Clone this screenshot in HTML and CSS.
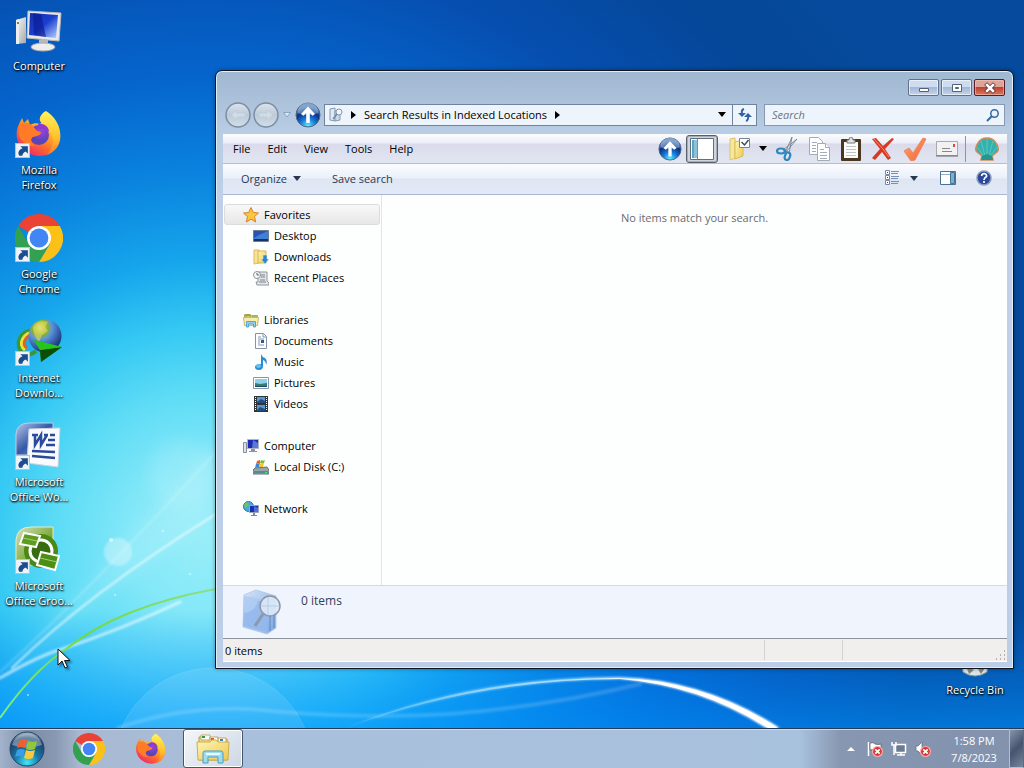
FILE: index.html
```html
<!DOCTYPE html>
<html lang="en">
<head>
<meta charset="utf-8">
<title>Search Results in Indexed Locations</title>
<link rel="stylesheet" href="styles.css">
</head>
<body>
<svg class="defs" aria-hidden="true">
  <defs>
    <linearGradient id="gFox" x1="1" y1="0" x2="0.2" y2="1"><stop offset="0" stop-color="#fff44f"/><stop offset=".35" stop-color="#ffb62a"/><stop offset=".65" stop-color="#ff6a2a"/><stop offset="1" stop-color="#e8207c"/></linearGradient>
    <linearGradient id="gFlame" x1="0" y1="0" x2="0" y2="1"><stop offset="0" stop-color="#fff25a"/><stop offset=".6" stop-color="#ffc02c"/><stop offset="1" stop-color="#ff7a30"/></linearGradient>
    <radialGradient id="gPurple" cx=".6" cy=".3"><stop offset="0" stop-color="#a040e0"/><stop offset="1" stop-color="#5a45b8"/></radialGradient>
    <linearGradient id="gScreen" x1="0" y1="0" x2="1" y2="1"><stop offset="0" stop-color="#1230a8"/><stop offset=".5" stop-color="#1a3fd0"/><stop offset="1" stop-color="#b8d4ff"/></linearGradient>
    <linearGradient id="gMetal" x1="0" y1="0" x2="1" y2="1"><stop offset="0" stop-color="#fafafa"/><stop offset="1" stop-color="#a8a8a8"/></linearGradient>
    <radialGradient id="gUp" cx=".5" cy=".95" r=".8"><stop offset="0" stop-color="#5cf0ff"/><stop offset=".4" stop-color="#1878d8"/><stop offset=".75" stop-color="#0b2f80"/><stop offset="1" stop-color="#5a86bc"/></radialGradient>
    <linearGradient id="gDim" x1="0" y1="0" x2="0" y2="1"><stop offset="0" stop-color="#dce4ec"/><stop offset=".5" stop-color="#bccad8"/><stop offset="1" stop-color="#d3dfe9"/></linearGradient>
    <linearGradient id="gFolder" x1="0" y1="0" x2="1" y2="1"><stop offset="0" stop-color="#fff6b8"/><stop offset="1" stop-color="#ecc850"/></linearGradient>
    <linearGradient id="gWord" x1="0" y1="0" x2="1" y2="1"><stop offset="0" stop-color="#b8c8e8"/><stop offset=".5" stop-color="#3458a8"/><stop offset="1" stop-color="#8aa4d8"/></linearGradient>
    <linearGradient id="gGroove" x1="0" y1="0" x2="1" y2="1"><stop offset="0" stop-color="#d8e0c0"/><stop offset=".6" stop-color="#7aaa38"/><stop offset="1" stop-color="#3a7a10"/></linearGradient>
    <radialGradient id="gGlobe" cx=".35" cy=".25" r=".8"><stop offset="0" stop-color="#f4f080"/><stop offset=".3" stop-color="#8ab030"/><stop offset=".45" stop-color="#5a94e0"/><stop offset="1" stop-color="#10286c"/></radialGradient>
    <radialGradient id="gOrb" cx=".5" cy=".9" r=".9"><stop offset="0" stop-color="#40e8f8"/><stop offset=".4" stop-color="#1878a8"/><stop offset=".8" stop-color="#1a4068"/><stop offset="1" stop-color="#a8c0d4"/></radialGradient>
    <linearGradient id="gBox" x1="0" y1="0" x2="1" y2="1"><stop offset="0" stop-color="#d4e4f8"/><stop offset="1" stop-color="#7ea6e0"/></linearGradient>
    <linearGradient id="gCheck" x1="0" y1="0" x2="1" y2="1"><stop offset="0" stop-color="#ffa878"/><stop offset="1" stop-color="#f06030"/></linearGradient>
    <symbol id="firefox" viewBox="0 0 48 48">
      <path d="M4 14 7 8l2 5 4-4 2 6c3-2 7-2 10-1l4-4c2 2 6 4 9 9l5-3c4 8 3 18-3 24-7 7-20 8-28 2C2 36-1 24 4 14Z" fill="url(#gFox)"/>
      <path d="M31 1c8 5 15 14 14 26-1 9-6 15-13 18 5-6 7-12 5-19-2-6-9-10-12-15-1-4 2-8 6-10Z" fill="url(#gFlame)"/>
      <circle cx="24" cy="25" r="10" fill="url(#gPurple)"/>
      <path d="M4 15c6-4 13-2 17 5 2 2 5 1 5 3-1 3-5 3-8 4-3 2-2 6 2 9-8 1-13-4-16-10Z" fill="#ff7b26"/>
      <path d="M23 14c5-1 11 2 11 8-3-4-7-4-10-3Z" fill="#9138cf"/>
    </symbol>
    <symbol id="chrome" viewBox="0 0 48 48">
      <path d="M24 24 3.2 12A24 24 0 0 1 44.8 12Z" fill="#ea4335"/>
      <path d="M24 12h20.8A24 24 0 0 1 24 48l11-18Z" fill="#fbc116"/>
      <path d="M3.2 12A24 24 0 0 0 24 48l10.4-18L24 35 13.6 30Z" fill="#34a150"/>
      <circle cx="24" cy="24" r="12" fill="#fff"/><circle cx="24" cy="24" r="9.4" fill="#4285f4"/>
    </symbol>
    <symbol id="shortcut" viewBox="0 0 14 14">
      <path d="M0 0h14v14H0Z" fill="#eef3f8"/><path d="M.5.5h13v13H.5Z" fill="none" stroke="#b8c4d0"/>
      <path d="M5 3h7v7L10 8C8 9 7 10 7 12H4C2 9 4 6 7 5Z" fill="#1c4c90"/>
    </symbol>
    <symbol id="up" viewBox="0 0 26 26">
      <circle cx="13" cy="13" r="12" fill="url(#gUp)" stroke="#4c6684"/>
      <path d="M2.500 11A10.500 10.500 0 0 1 23.500 11Q13 15 2.500 11Z" fill="#b4cce8" opacity=".45"/>
      <path d="M13 4.500 20 12l-2.500 1.800L14.800 11v10h-3.600V11l-2.700 2.800L6 12Z" fill="#fff"/>
    </symbol>
    <symbol id="caret" viewBox="0 0 8 5"><path d="M0 0h8L4 5Z" fill="currentColor"/></symbol>
    <symbol id="explorer" viewBox="0 0 34 30">
      <path d="M3 3h11l2 2h15v21H3Z" fill="#f3dc88" stroke="#b89848"/>
      <path d="M5 1h9v5H5ZM14 3h8v5h-8ZM22 4h8v5h-8Z" fill="#fff" stroke="#c4a860"/>
      <path d="M6 2h3v2H6Z" fill="#3a9838"/><path d="M15 4h3v2h-3Z" fill="#d86028"/><path d="M24 5h3v2h-3Z" fill="#4080c0"/>
      <path d="M1 8h13l2-2h4l2 2h11l-1 18H2Z" fill="url(#gFolder)" stroke="#d0ac4c"/>
      <path d="M7 29V19q0-2 2-2h16q2 0 2 2v10h-5v-6H12v6Z" fill="#9cdcf0" stroke="#4e9cc4"/>
      <path d="M10 20h14" stroke="#e8fbff" stroke-width="2"/>
    </symbol>
    <symbol id="redx" viewBox="0 0 10 10"><circle cx="5" cy="5" r="4.500" fill="#d83838" stroke="#f4b0a8"/><path d="m3 3 4 4M7 3 3 7" stroke="#fff" stroke-width="1.500"/></symbol>
  </defs>
</svg>

<main class="desktop">
  <svg class="wallpaper" viewBox="0 0 1024 728" preserveAspectRatio="none" aria-hidden="true">
    <defs>
      <radialGradient id="sky" gradientUnits="userSpaceOnUse" cx="205" cy="540" r="820">
        <stop offset="0" stop-color="#98eef8"/><stop offset=".09" stop-color="#84e8f8"/><stop offset=".18" stop-color="#5edcf6"/><stop offset=".26" stop-color="#34c8f3"/><stop offset=".34" stop-color="#16a6ec"/><stop offset=".45" stop-color="#0a82de"/><stop offset=".57" stop-color="#0564cc"/><stop offset=".72" stop-color="#064fb0"/><stop offset=".88" stop-color="#054798"/><stop offset="1" stop-color="#054a9c"/>
      </radialGradient>
      <linearGradient id="floor" x1="0" y1="0" x2="0" y2="1"><stop offset="0" stop-color="#0086ff" stop-opacity="0"/><stop offset="1" stop-color="#0094ff" stop-opacity=".6"/></linearGradient>
      <linearGradient id="fade" x1="0" y1="0" x2="1" y2="0"><stop offset="0" stop-color="#fff" stop-opacity=".1"/><stop offset=".5" stop-color="#d0f6ff" stop-opacity=".6"/><stop offset=".7" stop-color="#fff"/></linearGradient>
      <linearGradient id="green" x1="0" y1="0" x2="1" y2="0"><stop offset="0" stop-color="#7cec84"/><stop offset=".4" stop-color="#74d83c"/><stop offset="1" stop-color="#8ce08c"/></linearGradient>
      <filter id="soft"><feGaussianBlur stdDeviation="1"/></filter>
      <filter id="haze"><feGaussianBlur stdDeviation="8"/></filter>
    </defs>
    <path d="M0 0h1024v728H0Z" fill="url(#sky)"/>
    <path d="M0 610h1024v118H0Z" fill="url(#floor)"/>
    <path d="M0 684 100 570 216 440v76L90 605Z" fill="#fff" opacity=".12" filter="url(#haze)"/>
    <circle cx="182" cy="474" r="34" fill="#fff" opacity=".12" filter="url(#haze)"/>
    <circle cx="118" cy="552" r="14" fill="#fff" opacity=".32" filter="url(#soft)"/>
    <circle cx="213" cy="768" r="100" fill="#fff" fill-opacity=".1" stroke="#fff" stroke-opacity=".12"/>
    <g fill="none" stroke="#fff" stroke-linecap="round">
      <path d="M0 672Q80 600 216 452" stroke-opacity=".2" stroke-width="2" filter="url(#soft)"/>
      <path d="M12 668Q90 592 216 514" stroke-opacity=".7" stroke-width="2" filter="url(#soft)"/>
      <path d="M0 678Q38 656 62 649 120 630 180 602" stroke-opacity=".6" stroke-width="3" filter="url(#soft)"/>
      <path d="M118 728Q180 706 250 709 350 720 450 714 550 706 640 684" stroke-opacity=".16" stroke-width="4" filter="url(#soft)"/>
    </g>
    <path d="M0 718Q32 672 66 649 120 606 216 589" fill="none" stroke="url(#green)" stroke-width="2"/>
    <path d="M345 728Q470 676 620 677 706 680 780 728h-14Q700 686 620 679 480 680 345 728Z" fill="url(#fade)" filter="url(#soft)"/>
    <path d="M345 728Q470 677 620 678 706 681 778 728h-10Q700 685 620 679 480 679 345 728Z" fill="url(#fade)"/>
    <g fill="#fff" opacity=".6"><circle cx="111" cy="540" r="2"/><circle cx="163" cy="531" r="1"/><circle cx="190" cy="574" r="1"/><circle cx="115" cy="595" r="1"/><circle cx="28" cy="695" r="1"/></g>
  </svg>

  <nav class="shortcuts" aria-label="Desktop">
    <a class="shortcut" href="#"><svg viewBox="0 0 48 48"><path d="m1 14 10-3v26l-10 1Z" fill="url(#gMetal)"/><path d="M1 14l3-1v25H1Z" fill="#eee"/><circle cx="3" cy="17" r="1" fill="#364"/><path d="m13 5 33 2-2 28-32-3Z" fill="#e8e8ea" stroke="#bbb"/><path d="m15 7 28 2-2 23-27-3Z" fill="url(#gScreen)"/><path d="m18 7 8 1 5 23-12-2Z" fill="#0a1890" opacity=".6"/><path d="M24 34h9v6h-9Z" fill="#b8b8ba"/><ellipse cx="28" cy="41" rx="12" ry="4" fill="#ededed" stroke="#aaa"/></svg><span>Computer</span></a>
    <a class="shortcut" href="#"><svg viewBox="0 0 48 48"><use href="#firefox"/><use href="#shortcut" x="0" y="33" width="15" height="15"/></svg><span>Mozilla Firefox</span></a>
    <a class="shortcut" href="#"><svg viewBox="0 0 48 48"><use href="#chrome"/><use href="#shortcut" x="0" y="33" width="15" height="15"/></svg><span>Google Chrome</span></a>
    <a class="shortcut" href="#"><svg viewBox="0 0 48 48"><path d="M20 12C4 12-1 28 8 35q6 4 13-2" fill="none" stroke="#389838" stroke-width="4"/><path d="M20 14C8 14 2 27 10 32" fill="none" stroke="#f0e030" stroke-width="3"/><path d="M20 17C11 16 6 26 12 30" fill="none" stroke="#e06028" stroke-width="3"/><circle cx="30" cy="18" r="16.500" fill="url(#gGlobe)"/><path d="M18 9q7-8 15-5l-3 5 3 4-6 4-3 7q-6-6-6-15Z" fill="#dcd860" opacity=".6"/><path d="m19 22 28 7-21 15-1-12Z" fill="#18b010"/><path d="m25 32 22-3-21 15Z" fill="#0b4c08"/><path d="m19 22 28 7-22 3Z" fill="#26c41c"/><use href="#shortcut" x="0" y="33" width="15" height="15"/></svg><span>Internet Downlo...</span></a>
    <a class="shortcut" href="#"><svg viewBox="0 0 48 48"><path d="M1 12Q2 1 14 1h24v32H1Z" fill="url(#gWord)" stroke="#c0cce4"/><path d="m14 7 31-1-2 39-31-4Z" fill="#f8fafe" stroke="#ccd4e4"/><path d="M17 13h6M20 13l0 10 6-10 0 10 6-10M29 13h4" fill="none" stroke="#2b4c9c" stroke-width="2.500"/><path d="M35 13h5M33 18h7M31 23h9M17 29l23 1M17 34l23 2" stroke="#2a4a98" stroke-width="2.500"/><use href="#shortcut" x="0" y="33" width="15" height="15"/></svg><span>Microsoft Office Wo...</span></a>
    <a class="shortcut" href="#"><svg viewBox="0 0 48 48"><path d="M1 14Q2 1 16 1h22v38H1Z" fill="url(#gGroove)" stroke="#e4ecc8"/><circle cx="26" cy="25" r="17" fill="#4b8818"/><circle cx="26" cy="25" r="11" fill="#386c10" stroke="#fff" stroke-width="3"/><path d="m9 7 16 3-4 11L5 18Z" fill="#5c9c20" stroke="#fff" stroke-width="2"/><path d="m26 26 18 4-4 14-18-5Z" fill="#4b9014" stroke="#fff" stroke-width="2"/><path d="m8 12 14 3M25 32l17 4" stroke="#a8cc70"/><use href="#shortcut" x="0" y="33" width="15" height="15"/></svg><span>Microsoft Office Groo...</span></a>
  </nav>
  <a class="shortcut recycle" href="#"><svg viewBox="0 0 48 48"><path d="M9 4h30l-3 38q-12 8-24 0Z" fill="#dfe4e4" stroke="#87918e"/><path d="m15 36 8 4-5 4ZM27 39l7-1-4 6Z" fill="#7d8984"/></svg><span>Recycle Bin</span></a>

  <section class="window" aria-label="Search Results in Indexed Locations">
    <header class="titlebar">
      <button class="caption" aria-label="Minimize"><svg viewBox="0 0 12 12"><path d="M1.500 6.500h9v3h-9Z" fill="#fff" stroke="#555f78"/></svg></button>
      <button class="caption" aria-label="Maximize"><svg viewBox="0 0 12 12"><path d="M1.500 2.500h9v7h-9Z" fill="#fff" stroke="#555f78"/><path d="M4.500 5.500h3v1h-3Z" fill="#9bb" stroke="#555f78"/></svg></button>
      <button class="caption close" aria-label="Close"><svg viewBox="0 0 12 12"><path d="m3 3 6 6M9 3 3 9" stroke="#5d3438" stroke-width="4" stroke-linecap="square"/><path d="m3 3 6 6M9 3 3 9" stroke="#fff" stroke-width="2.500" stroke-linecap="square"/></svg></button>
    </header>
    <div class="navbar">
      <div class="history">
        <button class="plain" aria-label="Back"><svg width="26" height="26" viewBox="0 0 26 26"><circle cx="13" cy="13" r="12" fill="url(#gDim)" stroke="#7b8da3" stroke-width="1.500"/><path d="m6 13 6-5v3h8v4h-8v3Z" fill="#d0dbe6" stroke="#bccad8" stroke-width=".7"/></svg></button>
        <button class="plain" aria-label="Forward"><svg width="26" height="26" viewBox="0 0 26 26"><circle cx="13" cy="13" r="12" fill="url(#gDim)" stroke="#7b8da3" stroke-width="1.500"/><path d="m20 13-6-5v3H6v4h8v3Z" fill="#d0dbe6" stroke="#bccad8" stroke-width=".7"/></svg></button>
      </div>
      <button class="plain recent" aria-label="Recent pages"><svg width="8" height="6" viewBox="0 0 8 6"><path d="M.5.500h7L4 5Z" fill="#dce8f4" stroke="#8ba4c0"/></svg></button>
      <button class="plain" aria-label="Up"><svg width="26" height="26"><use href="#up"/></svg></button>
      <div class="address">
        <svg width="14" height="16" viewBox="0 0 14 16"><path d="m1 2 5-1v13l-5-1Z" fill="#dfe9f4" stroke="#8498b0"/><path d="M6 4h5v9l-5 1Z" fill="#c8d6e6" stroke="#8498b0"/><circle cx="10" cy="5" r="3" fill="#eef4fa" stroke="#8498b0"/><path d="m8 7-4 5" stroke="#7088a4" stroke-width="1.500"/></svg>
        <svg width="5" height="8" viewBox="0 0 5 8"><path d="m0 0 5 4-5 4Z"/></svg>
        <button class="plain crumb">Search Results in Indexed Locations</button>
        <svg width="5" height="8" viewBox="0 0 5 8"><path d="m0 0 5 4-5 4Z"/></svg>
        <button class="plain drop" aria-label="Previous locations"><svg width="8" height="5"><use href="#caret"/></svg></button>
        <button class="plain refresh" aria-label="Refresh"><svg width="14" height="14" viewBox="0 0 14 14"><path d="M6 1Q3 2 4 6M8 13q3-1 2-6" fill="none" stroke="#2f62a8" stroke-width="2"/><path d="m0 5 4 4 4-4ZM6 9l4-4 4 4Z" fill="#2f62a8"/></svg></button>
      </div>
      <label class="search"><input type="text" placeholder="Search" aria-label="Search">
        <svg width="14" height="14" viewBox="0 0 14 14"><circle cx="8.500" cy="5.500" r="3.700" fill="#eaf4fc" stroke="#34689e" stroke-width="1.500"/><path d="m6 8-5 5" stroke="#34689e" stroke-width="2"/></svg></label>
    </div>

    <div class="menubar">
      <nav class="menus" aria-label="Menu">
        <button class="plain">File</button><button class="plain">Edit</button><button class="plain">View</button><button class="plain">Tools</button><button class="plain">Help</button>
      </nav>
      <div class="tools">
        <button class="tool" aria-label="Up one level"><svg><use href="#up"/></svg></button>
        <button class="tool pressed" aria-label="Navigation pane"><svg viewBox="0 0 24 24"><path d="M.5 1.500h23v21H.5Z" fill="#fff" stroke="#5d6f80"/><path d="M2 3h5v18H2Z" fill="#8bc2d8"/><path d="M2 3h2v18H2Z" fill="#5da4c0"/><path d="M7.500 2v20" stroke="#7090a4"/></svg></button>
        <button class="tool wide" aria-label="Folder options"><svg viewBox="0 0 24 24"><path d="m3 2 5-1v20l-5 2Z" fill="#f6e6a0" stroke="#dcc468"/><path d="m8 5 8-2v16l-8 3Z" fill="url(#gFolder)" stroke="#dabc54"/><path d="M12.500 1.500h10v9h-10Z" fill="#fff" stroke="#788494"/><path d="m14.500 5 3 3 4-5" fill="none" stroke="#3c4c64" stroke-width="1.500"/></svg></button>
        <button class="tool narrow" aria-label="More options"><svg class="caret" viewBox="0 0 8 5"><use href="#caret"/></svg></button>
        <button class="tool" aria-label="Cut"><svg viewBox="0 0 24 24"><path d="m22 2-11 13-3-2ZM17 0l-3 17-3-3Z" fill="#dfe4ea" stroke="#6c7886" stroke-width=".8"/><ellipse cx="6" cy="14" rx="4" ry="2.500" fill="none" stroke="#2c88be" stroke-width="2.200"/><ellipse cx="12.500" cy="19" rx="2.500" ry="4" fill="none" stroke="#2c88be" stroke-width="2.200" transform="rotate(20 12 19)"/></svg></button>
        <button class="tool" aria-label="Copy"><svg viewBox="0 0 24 24"><g fill="#fff" stroke="#a4abb4"><path d="M2.500.500h9l4 4v13h-13Z"/><path d="M10.500 6.500h8l4 4v13h-12Z"/><path d="M18.500 6.500v4h4"/></g><path d="M5 5.500h5M5 8.500h4M5 11.500h4M5 14.500h4M13 12.500h4M13 15.500h7M13 18.500h7M13 21.500h7" stroke="#a0acbc"/></svg></button>
        <button class="tool" aria-label="Paste"><svg viewBox="0 0 24 24"><rect x="2" y="2" width="20" height="22" rx="1" fill="#49371f"/><path d="M5 5h14v16H5Z" fill="#fcfcfa"/><path d="M8 3h2q0-3 2-3t2 3h2v3H8Z" fill="#e4e4e4" stroke="#777"/><path d="M7 9.500h10M7 12.500h10M7 15.500h10M7 18.500h10" stroke="#c0c4c8"/></svg></button>
        <button class="tool" aria-label="Delete"><svg viewBox="0 0 24 24"><path d="m1 2 4-1 7 8 9-8 2 1-9 10 6 9-3 2-6-8-7 8-3-2 8-9Z" fill="#d63820"/><path d="m3 2 9 10 6 8" stroke="#ff8a68" fill="none"/></svg></button>
        <button class="tool" aria-label="Apply"><svg viewBox="0 0 24 24"><path d="m1 14 5-3 4 5L20 1l3 1-11 21-4 1Z" fill="url(#gCheck)" stroke="#f08860"/></svg></button>
        <button class="tool" aria-label="E-mail"><svg viewBox="0 0 24 24"><path d="M1.500 4.500h21v14h-21Z" fill="#f2f2f2" stroke="#aaa"/><path d="M1 19h22" stroke="#666"/><path d="M18 7h2v3h-2Z" fill="#dc4848"/><path d="M7 11.500h8M7 14.500h10" stroke="#888"/></svg></button>
        <span class="rule"></span>
        <button class="tool" aria-label="Classic settings"><svg viewBox="0 0 24 24"><path d="M12 1q6 0 9 5 4 6 1 9l-5 4 1 4H6l1-4-5-4Q-1 12 3 6q3-5 9-5Z" fill="#32b2ae" stroke="#d08c54" stroke-width="1.500"/><path d="M12 19V2M10 19 6 4M14 19l4-15M8 18 2 10M16 18l6-8" stroke="#5cc6be"/><path d="m7 19 5-2 5 2 1 4H6Z" fill="#28948e"/></svg></button>
      </div>
    </div>

    <div class="commands">
      <button class="plain">Organize <svg width="8" height="5"><use href="#caret"/></svg></button>
      <button class="plain save">Save search</button>
      <span class="spacer"></span>
      <button class="plain" aria-label="Change your view"><svg width="16" height="16" viewBox="0 0 16 16"><g fill="#fff" stroke="#7888a0"><path d="M1.500.500h4v4h-4ZM1.500 5.500h4v4h-4ZM1.500 10.500h4v4h-4Z"/></g><path d="M7 1.500h8M7 3.500h7M7 6.500h8M7 8.500h7M7 11.500h8M7 13.500h7" stroke="#7890b8"/><path d="M3 2h1v1H3ZM3 7h1v1H3ZM3 12h1v1H3Z" fill="#345"/></svg></button>
      <button class="plain more" aria-label="More views"><svg width="8" height="5"><use href="#caret"/></svg></button>
      <button class="plain preview" aria-label="Preview pane"><svg width="16" height="16" viewBox="0 0 16 16"><path d="M.5 1.500h15v13H.5Z" fill="#fff" stroke="#4a7094"/><path d="M10.500 2.500h4v11h-4Z" fill="#6eb4d4" stroke="#4a7094"/><path d="M1 4.500h9" stroke="#8fafc8"/></svg></button>
      <button class="plain" aria-label="Help"><svg width="16" height="16" viewBox="0 0 16 16"><circle cx="8" cy="8" r="7" fill="#2b489c" stroke="#8e9cb8" stroke-width="1.500"/><path d="M5.500 6Q6 3.500 8.200 3.500 11 4 10.500 6.500 8 8 8 10M8 11v2" fill="none" stroke="#fff" stroke-width="1.700"/></svg></button>
    </div>

    <div class="body">
      <nav class="tree" aria-label="Folders">
        <div class="group">
          <a class="node selected" href="#"><svg viewBox="0 0 16 16"><path d="m8 .500 2.300 5 5.200.500-4 3.600 1.200 5.400L8 12.200 3.300 15l1.200-5.400L.5 6l5.200-.500Z" fill="#fbc83c" stroke="#d8802c"/></svg>Favorites</a>
          <a class="node leaf" href="#"><svg viewBox="0 0 16 16"><path d="M.5 2.500h15v11H.5Z" fill="#2754b4" stroke="#6e7c90"/><path d="m1 10 5-3 9-4v8H1Z" fill="#4080d8"/><path d="M1 12h14" stroke="#1a3060" stroke-width="2"/></svg>Desktop</a>
          <a class="node leaf" href="#"><svg viewBox="0 0 16 16"><path d="M1 1h5v13l-5 1Z" fill="#f8e498" stroke="#dcba58"/><path d="M5 2h8v12H5Z" fill="url(#gFolder)" stroke="#dcb44c"/><path d="M10 6h4v4h2l-4 5-4-5h2Z" fill="#2a88cc" stroke="#e0f0fa" stroke-width=".5"/></svg>Downloads</a>
          <a class="node leaf" href="#"><svg viewBox="0 0 16 16"><path d="M5 2h9v9l2 2v2H4l-1-3h2Z" fill="#e4e6e8" stroke="#90969c"/><path d="M8 5h4M8 7h4M7 10h5M6 12h7" stroke="#78828c"/><circle cx="4" cy="5" r="3.500" fill="#f6f8f8" stroke="#8a9298"/><path d="M4 3v2h2" fill="none" stroke="#567"/></svg>Recent Places</a>
        </div>
        <div class="group">
          <a class="node" href="#"><svg viewBox="0 0 16 16"><path d="M1.500 2.500h6l1 1h6v9h-13Z" fill="#e8d070" stroke="#b8a858"/><path d="M2 4h2V3h2v1h2M9 5h5" stroke="#4ca850" fill="none"/><path d="M.5 5.500h15l-1 8h-13Z" fill="#f8ecb0" stroke="#ccb870"/><path d="M3.500 15V9.500h9V15h-2v-3h-5v3Z" fill="#90d0ec" stroke="#58a4cc"/></svg>Libraries</a>
          <a class="node leaf" href="#"><svg viewBox="0 0 16 16"><path d="M2.500.500h8l3 3v12h-11Z" fill="#fff" stroke="#8494a8"/><path d="M10 1v3h3" fill="none" stroke="#8494a8"/><path d="M5 4h3M5 6h6M5 8h2M5 10h2M5 12h6" stroke="#8098b8"/><path d="M8 7h3v3H8Z" fill="#385888"/></svg>Documents</a>
          <a class="node leaf" href="#"><svg viewBox="0 0 16 16"><path d="M8 0q1 3 4 4 3 3 1 7 0-4-3-5v6q0 4-4 4-4 0-4-3t6-3Z" fill="#2c8cd0"/><ellipse cx="5.500" cy="12" rx="2.500" ry="2" fill="#6cc0f0"/></svg>Music</a>
          <a class="node leaf" href="#"><svg viewBox="0 0 16 16"><path d="M.5 2.500h15v11H.5Z" fill="#fff" stroke="#8098b0"/><path d="M2 4h12v8H2Z" fill="#8cd0ec"/><path d="m2 8 5 1 7-1v4H2Z" fill="#34806c"/><path d="M2 11h12v1H2Z" fill="#246"/></svg>Pictures</a>
          <a class="node leaf" href="#"><svg viewBox="0 0 16 16"><path d="M1 0h14v16H1Z" fill="#303438"/><path d="M4 1h8v6H4ZM4 9h8v6H4Z" fill="#5c98d0"/><path d="m4 6 4-3 4 2v2H4ZM4 14l3-3 5 2v2H4Z" fill="#254c80"/><path d="M2.500 1v14M13.500 1v14" stroke="#fff" stroke-dasharray="1 1"/></svg>Videos</a>
        </div>
        <div class="group">
          <a class="node" href="#"><svg viewBox="0 0 16 16"><path d="M.5 4.500h3v10h-3Z" fill="#dde" stroke="#8890a0"/><path d="M4.500 1.500h11v9h-11Z" fill="#1c2cac" stroke="#b0b4c4"/><path d="m10 2 5 3v5H9Z" fill="#5878d8"/><path d="M8 11h4v2h2v1H6v-1h2Z" fill="#8d93a0"/></svg>Computer</a>
          <a class="node leaf" href="#"><svg viewBox="0 0 16 16"><path d="m2 9 12-1 2 3v4H0v-4Z" fill="#98a4a8" stroke="#60707c"/><path d="M1 12h14v2H1Z" fill="#4e8e90"/><path d="M12 13h2v1h-2Z" fill="#50e070"/><path d="m4 2 3-1v3l-4 1Z" fill="#e86028"/><path d="M8 1q2 1 4 0l-1 3q-2 1-4 0Z" fill="#80b838"/><path d="m3 5 4-1-1 4-4 1Z" fill="#3c88d0"/><path d="m7 5 4-1-1 4H6Z" fill="#f4c430"/></svg>Local Disk (C:)</a>
        </div>
        <div class="group">
          <a class="node" href="#"><svg viewBox="0 0 16 16"><circle cx="5.500" cy="5.500" r="5" fill="#48a8d8" stroke="#2878a0"/><path d="M3 1q4 1 2 4L2 7 1 4Z" fill="#6cc468"/><path d="M6.500 4.500h9v7h-9Z" fill="#1830b0" stroke="#98a4bc"/><path d="m11 5 4 2v4h-4Z" fill="#4c70d8"/><path d="M10 12h2v2h2v1H8v-1h2Z" fill="#7888a0"/></svg>Network</a>
        </div>
      </nav>
      <div class="results"><p>No items match your search.</p></div>
    </div>

    <div class="details">
      <svg width="40" height="46" viewBox="0 0 40 46"><path d="M2 6 14 1l20 6v32l-9 6L1 38Z" fill="url(#gBox)" stroke="#b4cdec"/><path d="m2 7 23 4v33L1 38Z" fill="#a8c8f2" opacity=".7"/><path d="M2 24q12-2 14-12l9 1v30L1 37Z" fill="#84aee8" opacity=".5"/><path d="M28 25v17M32 23v16" stroke="#5c86c4"/><circle cx="28" cy="17" r="10" fill="#dceaf8" fill-opacity=".9" stroke="#8b97a8" stroke-width="1.500"/><path d="M26 8v18M19 17h18" stroke="#b8cce4"/><path d="m21 25-8 12" stroke="#8c98ac" stroke-width="3"/></svg>
      <span>0 items</span>
    </div>
    <footer class="status"><span>0 items</span><span class="cell"></span><span class="cell last"></span>
      <svg class="grip" width="12" height="12" viewBox="0 0 12 12"><path d="M9 1h1v2H9ZM9 5h1v2H9ZM9 9h1v2H9ZM5 5h1v2H5ZM5 9h1v2H5ZM1 9h1v2H1Z" fill="#b5b2b0"/></svg></footer>
  </section>

  <svg class="cursor" width="14" height="21" viewBox="0 0 14 21" aria-hidden="true"><path d="M1 1v16l4-4 3 7 2.500-1-3-6.500H13Z" fill="#fff" stroke="#111"/></svg>
</main>

<footer class="taskbar">
  <button class="start" aria-label="Start"><svg width="38" height="38" viewBox="0 0 38 38"><circle cx="19" cy="19" r="17" fill="url(#gOrb)" stroke="#23425e"/><path d="M4 15A15.500 15.500 0 0 1 34 15Q19 20 4 15Z" fill="#dfeaf2" opacity=".4"/><path d="M11 11q4-3 8-1l-2 8q-4-2-8 0Z" fill="#ee6030"/><path d="M20 11q4 2 9 0l-2 8q-5 2-9 0Z" fill="#90c83c"/><path d="M9 20q4-2 8 0l-2 7q-4-2-8 0Z" fill="#3c9ce4"/><path d="M18 20q4 2 9 0l-2 8q-5 2-9 0Z" fill="#fcc83c"/></svg></button>
  <button class="task" aria-label="Google Chrome"><svg width="32" height="32"><use href="#chrome"/></svg></button>
  <button class="task" aria-label="Mozilla Firefox"><svg width="32" height="32"><use href="#firefox"/></svg></button>
  <button class="task active" aria-label="Windows Explorer"><svg width="34" height="30"><use href="#explorer"/></svg></button>
  <div class="tray">
    <button class="plain" aria-label="Show hidden icons"><svg width="8" height="4" viewBox="0 0 8 4"><path d="m0 4 4-4 4 4Z" fill="#fff"/></svg></button>
    <button class="plain" aria-label="Action Center"><svg width="16" height="16" viewBox="0 0 16 16"><path d="M1.500 1v14" stroke="#fff" stroke-width="1.500"/><path d="M3 2q4-1 5 1 3 1 6 0v7q-4 1-6-1-2-1-5 0Z" fill="#fff" stroke="#4c5a70" stroke-width=".7"/><use href="#redx" x="5" y="5" width="11" height="11"/></svg></button>
    <button class="plain" aria-label="Network"><svg width="16" height="16" viewBox="0 0 16 16"><path d="M4.500 3.500h10v8h-10Z" fill="#6b7a92" stroke="#fff" stroke-width="1.500"/><path d="M6 14h8M10 12v2" stroke="#fff" stroke-width="1.500"/><path d="M1 1v3h4V1M3 4v10" fill="none" stroke="#fff" stroke-width="1.500"/></svg></button>
    <button class="plain" aria-label="Volume"><svg width="16" height="16" viewBox="0 0 16 16"><path d="M1 5h2l4-4v13l-4-4H1Z" fill="#fff" stroke="#5a6880" stroke-width=".7"/><use href="#redx" x="5" y="5" width="11" height="11"/></svg></button>
    <time class="clock" datetime="2023-07-08T13:58"><span>1:58 PM</span><span>7/8/2023</span></time>
    <button class="peek" aria-label="Show desktop"></button>
  </div>
</footer>
</body>
</html>
```
FILE: styles.css
```css
* { box-sizing: border-box; }

body {
  margin: 0;
  min-height: 100vh;
  display: flex;
  flex-direction: column;
  overflow: hidden;
  font: 11px/15px "Open Sans", "Noto Sans", sans-serif;
  color: #000;
}

button, input { font: inherit; color: inherit; }
a { color: inherit; text-decoration: none; }
svg { display: block; flex: none; }
.defs { position: absolute; width: 0; height: 0; }

.plain {
  display: flex;
  align-items: center;
  gap: 6px;
  padding: 0;
  border: 0;
  background: none;
  white-space: nowrap;
}

/* Desktop */
.desktop { position: relative; flex: 1; min-height: 600px; overflow: hidden; }
.wallpaper { position: absolute; inset: 0; width: 100%; height: 100%; }

.shortcuts {
  position: relative;
  display: flex;
  flex-direction: column;
  width: 78px;
  padding-top: 6px;
}
.shortcut {
  display: flex;
  flex-direction: column;
  align-items: center;
  gap: 4px;
  height: 104px;
  width: 78px;
  color: #fff;
  text-align: center;
  text-shadow: 0 1px 2px #000, 1px 1px 2px #000;
}
.shortcut svg { width: 48px; height: 48px; }
.shortcut span { max-width: 74px; }
.recycle { position: absolute; right: 10px; bottom: -6px; }

.cursor { position: absolute; left: 57px; top: 648px; filter: drop-shadow(2px 2px 1px rgba(0, 0, 0, .4)); }

/* Explorer window */
.window {
  position: absolute;
  left: 215px;
  top: 70px;
  right: 10px;
  bottom: 59px;
  display: flex;
  flex-direction: column;
  padding: 0 6px 6px 7px;
  border: 1px solid #10141c;
  border-radius: 7px 7px 0 0;
  background: linear-gradient(#a0b7d1, #b8cde4 60px, #c1d0ea 150px, #bccde8);
  box-shadow: inset 0 0 0 1px #e1eef8, 0 0 4px rgba(0, 0, 0, .35);
}

.titlebar {
  display: flex;
  justify-content: flex-end;
  gap: 2px;
  padding: 8px 2px 0 0;
  height: 28px;
}
.caption {
  display: grid;
  place-items: center;
  width: 31px;
  height: 17px;
  padding: 0;
  border: 1px solid #60718e;
  border-radius: 2px;
  background: linear-gradient(#cedcf0 45%, #a3b8d6 50%, #c3d5eb);
  box-shadow: inset 0 0 0 1px rgba(255, 255, 255, .6);
}
.caption svg { width: 12px; height: 12px; }
.close {
  border-color: #5a1c26;
  background: linear-gradient(#dfa39a 45%, #bc4230 50%, #d87860);
  box-shadow: inset 0 0 0 1px rgba(255, 205, 190, .5);
}

.navbar {
  display: flex;
  align-items: center;
  height: 35px;
  padding: 0 2px 4px;
}
.history { display: flex; gap: 2px; }
.recent { margin: 0 4px; }
.address {
  display: flex;
  align-items: center;
  flex: 1;
  height: 22px;
  margin: 0 7px 0 3px;
  padding-left: 4px;
  gap: 8px;
  border: 1px solid #70839c;
  background: #edf4fb;
}
.drop { margin-left: auto; }
.refresh {
  align-self: stretch;
  justify-content: center;
  width: 24px;
  margin-left: -2px;
  border-left: 1px solid #70839c;
}
.search {
  display: flex;
  align-items: center;
  width: 241px;
  height: 22px;
  padding: 0 4px 0 7px;
  border: 1px solid #8799b0;
  background: #edf4fb;
}
.search input { flex: 1; min-width: 0; padding: 0; border: 0; outline: 0; background: none; font-style: italic; }
.search input::placeholder { color: #6c747e; opacity: 1; }

.menubar {
  display: flex;
  align-items: center;
  justify-content: space-between;
  height: 30px;
  border-bottom: 1px solid #b4bdd4;
  background: linear-gradient(#fbfcfe, #eceff8 9px, #d9dbeb 10px, #e2e6f2);
}
.menus { display: flex; gap: 17px; padding-left: 10px; }
.tools { display: flex; align-items: center; height: 100%; padding-right: 4px; }
.tool {
  display: grid;
  place-items: center;
  width: 32px;
  height: 28px;
  padding: 0;
  border: 0;
  background: none;
}
.tool svg { width: 24px; height: 24px; }
.pressed { border: 1px solid #58606c; border-radius: 3px; background: #d0d4dd; box-shadow: inset 0 0 0 1px #a8aeb8; }
.wide { width: 37px; padding-left: 5px; }
.narrow { width: 16px; }
.tool .caret { width: 8px; height: 5px; }
.rule { width: 1px; height: 26px; margin: 0 5px 0 2px; background: #8b94a8; }

.commands {
  display: flex;
  align-items: center;
  height: 31px;
  padding: 0 15px 2px 18px;
  border-bottom: 1px solid #a9b8cf;
  background: linear-gradient(#fafcff, #eaf0fa 14px, #dee6f4 15px, #e2eaf7);
  color: #2a3850;
}
.save { margin-left: 31px; }
.spacer { flex: 1; }
.more { margin: 0 22px 0 10px; }
.preview { margin-right: 20px; }

.body { display: flex; flex: 1; min-height: 0; background: #fdfefe; }
.tree {
  width: 159px;
  padding-top: 9px;
  border-right: 1px solid #dfe6f0;
  overflow: hidden;
}
.group { margin-bottom: 21px; }
.node {
  display: flex;
  align-items: center;
  gap: 5px;
  height: 21px;
  margin: 0 1px;
  padding-left: 18px;
  border: 1px solid transparent;
  white-space: nowrap;
}
.node svg { width: 16px; height: 16px; }
.leaf { padding-left: 28px; }
.selected { border-color: #dcdcdc; border-radius: 3px; background: linear-gradient(#f8f8f8, #e7e7e7); }
.results { flex: 1; padding-top: 6px; text-align: center; color: #6b6b6b; }
.results p { margin: 9px 0; }

.details {
  display: flex;
  gap: 19px;
  height: 53px;
  padding: 3px 0 0 19px;
  border-top: 1px solid #cfdbea;
  background: #f0f4fd;
  color: #34405a;
  font-size: 12px;
}
.details span { padding-top: 4px; }
.status {
  display: flex;
  align-items: center;
  height: 24px;
  padding-left: 2px;
  border-top: 1px solid #8f949c;
  border-bottom: 1px solid #fff;
  background: #f1efee;
}
.cell { width: 78px; height: 20px; margin-left: auto; border-left: 1px solid #d5d3d2; }
.cell.last { width: 153px; margin-left: 0; }
.grip { align-self: flex-end; }

/* Taskbar */
.taskbar {
  position: relative;
  display: flex;
  align-items: center;
  height: 40px;
  border-top: 1px solid #243c58;
  background: linear-gradient(90deg, #a3b3cb, #7d8da9 30px, #8898b2 55px, #a8b9d1 80px, #a8c0dc 240px, #a8c1dd 800px, #8797b1 840px, #8292ac);
  box-shadow: inset 0 1px #cbd9e8;
}
.start { width: 59px; height: 39px; padding: 0 0 0 8px; border: 0; background: none; }
.task {
  display: grid;
  place-items: center;
  width: 60px;
  height: 39px;
  margin-right: 2px;
  padding: 0;
  border: 1px solid transparent;
  border-radius: 3px;
  background: none;
}
.active { border-color: #45566e; background: linear-gradient(135deg, #f4f7fa, #ccd7e4); box-shadow: inset 0 0 0 1px #fff; }
.tray { display: flex; align-items: center; align-self: stretch; margin-left: auto; color: #fff; }
.tray .plain { margin-right: 8px; }
.tray .plain:first-child { margin-right: 12px; }
.clock { display: flex; flex-direction: column; width: 70px; line-height: 17px; text-align: center; }
.peek {
  align-self: stretch;
  width: 15px;
  padding: 0;
  border: 1px solid #b4bfce;
  border-right-color: #5c6a80;
  background: linear-gradient(135deg, #8794aa, #46556e 50%, #77859c);
}
```
